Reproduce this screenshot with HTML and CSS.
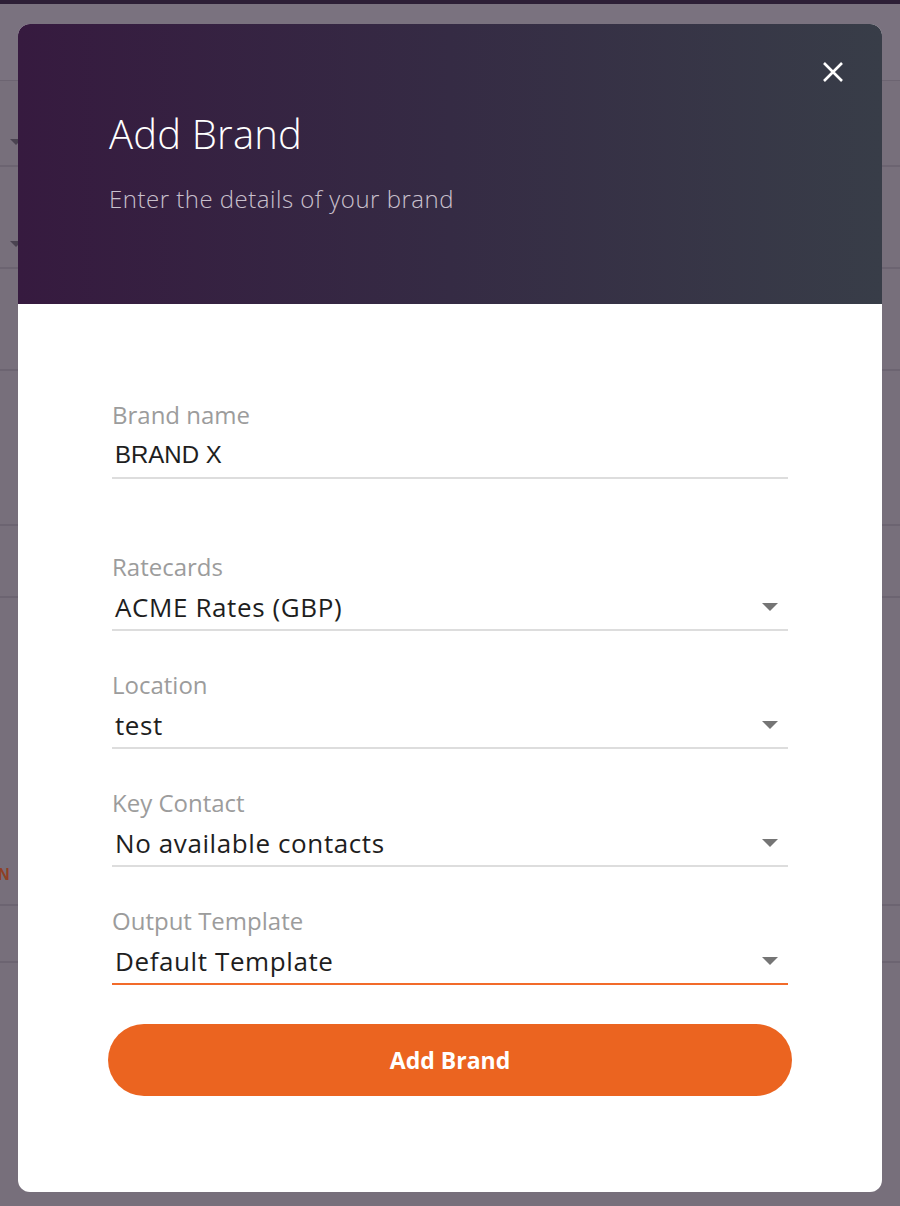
FILE: index.html
```html
<!DOCTYPE html>
<html lang="en">
    <head>
        <meta charset="utf-8"/>
        <title>Add Brand</title>
        <link rel="stylesheet" href="styles.css">
    </head>
    <body>
        <div class="page">
            <div class="topBar"></div>
            <div class="pageHead"></div>
            <div class="row r1"><span class="caret"></span></div>
            <div class="row r2"><span class="caret"></span></div>
            <div class="row r3"></div>
            <div class="row r4"></div>
            <div class="row r5"></div>
            <div class="row r6"><span class="tag">N</span></div>
            <div class="row r7"></div>
        </div>

        <div class="modal">
            <div class="modalHead">
                <h1>Add Brand</h1>
                <p>Enter the details of your brand</p>
                <button class="close" aria-label="Close">
                    <svg width="24" height="24" viewBox="0 0 24 24">
                        <path d="M3 3 L21 21 M21 3 L3 21" stroke="#ffffff" stroke-width="2.6" fill="none"/>
                    </svg>
                </button>
            </div>
            <div class="modalBody">
                <div class="field first">
                    <label>Brand name</label>
                    <div class="value input">BRAND X</div>
                </div>
                <div class="field">
                    <label>Ratecards</label>
                    <div class="value">ACME Rates (GBP)<span class="arrow"></span></div>
                </div>
                <div class="field">
                    <label>Location</label>
                    <div class="value">test<span class="arrow"></span></div>
                </div>
                <div class="field">
                    <label>Key Contact</label>
                    <div class="value">No available contacts<span class="arrow"></span></div>
                </div>
                <div class="field active">
                    <label>Output Template</label>
                    <div class="value">Default Template<span class="arrow"></span></div>
                </div>
                <button class="submit">Add Brand</button>
            </div>
        </div>
    </body>
</html>
```

FILE: styles.css
```css
body {
    margin: 0;
    background: #776f7b;
    font-family: "Open Sans", sans-serif;
}

.page {
    height: 1206px;
}

.topBar {
    height: 4px;
    background: #2d1f36;
}

.pageHead {
    height: 76px;
    background: #7a727f;
    border-bottom: 1px solid #6c6471;
}

.row {
    position: relative;
    border-bottom: 2px solid #6c6471;
}

.r1 { height: 84px; }
.r2 { height: 100px; }
.r3 { height: 100px; }
.r4 { height: 153px; }
.r5 { height: 70px; }
.r6 { height: 306px; }
.r7 { height: 55px; }

.caret {
    position: absolute;
    left: 10px;
    bottom: 20px;
    border-left: 6px solid transparent;
    border-right: 6px solid transparent;
    border-top: 6px solid #4a4350;
}

.tag {
    position: absolute;
    left: -2px;
    bottom: 20px;
    font-family: "Liberation Sans", sans-serif;
    font-weight: bold;
    font-size: 16px;
    color: #8f3f24;
}

.modal {
    position: absolute;
    left: 18px;
    top: 24px;
    width: 864px;
    height: 1168px;
    background: #ffffff;
    border-radius: 12px;
    overflow: hidden;
}

.modalHead {
    position: relative;
    height: 280px;
    box-sizing: border-box;
    padding: 84px 91px 0;
    background: linear-gradient(90deg, #361a3f 0%, #352b44 50%, #383d48 100%);
    color: #ffffff;
}

.modalHead h1 {
    margin: 0;
    font-size: 40px;
    font-weight: 300;
    line-height: 52px;
    letter-spacing: 0.2px;
}

.modalHead p {
    margin: 24px 0 0;
    font-size: 24px;
    font-weight: 300;
    line-height: 30px;
    letter-spacing: 0.5px;
    color: #c9c0cd;
}

.close {
    position: absolute;
    top: 36px;
    right: 37px;
    width: 24px;
    height: 24px;
    padding: 0;
    border: 0;
    background: none;
}

.close svg {
    display: block;
}

.modalBody {
    padding: 97px 94px 0;
}

.field {
    margin-top: 40px;
    border-bottom: 2px solid #dddddd;
}

.field.first {
    margin-top: 0;
}

.field.first + .field {
    margin-top: 74px;
}

.field.active {
    border-bottom-color: #f26b2a;
}

.field label {
    display: block;
    font-size: 24px;
    line-height: 28px;
    color: #9c9c9c;
}

.value {
    display: flex;
    align-items: center;
    justify-content: space-between;
    margin-top: 4px;
    padding-left: 3px;
    height: 44px;
    font-size: 26px;
    letter-spacing: 0.6px;
    color: #1e1e1e;
}

.value.input {
    font-family: "Liberation Sans", sans-serif;
    font-size: 24px;
    letter-spacing: 0;
}

.arrow {
    margin-right: 10px;
    border-left: 8px solid transparent;
    border-right: 8px solid transparent;
    border-top: 8px solid #757575;
}

.submit {
    display: block;
    width: 684px;
    height: 72px;
    margin: 39px 0 0 -4px;
    border: 0;
    border-radius: 36px;
    background: #eb6420;
    color: #ffffff;
    font-family: "Open Sans", sans-serif;
    font-size: 23px;
    font-weight: bold;
}
```
